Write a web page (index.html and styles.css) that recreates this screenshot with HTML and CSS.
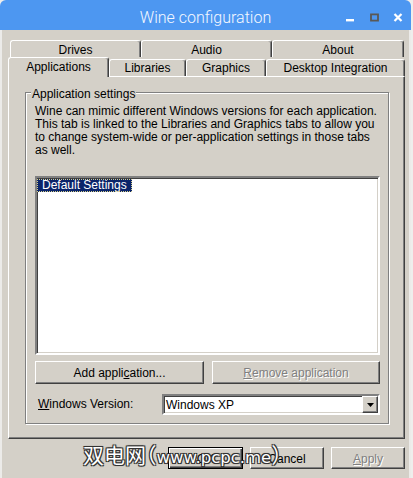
FILE: index.html
```html
<!DOCTYPE html>
<html>
<head>
<meta charset="utf-8">
<link rel="stylesheet" href="styles.css">
</head>
<body>
<div class="window">
  <div class="titlebar">
    <span class="title">Wine configuration</span>
    <svg class="controls" width="70" height="30" viewBox="0 0 70 30">
      <rect x="6" y="19" width="8" height="2.4" fill="#ffffff"/>
      <rect x="31" y="14.4" width="7" height="6.2" fill="none" stroke="#5a5855" stroke-width="1.8"/>
      <path d="M54.5 14 L61.5 21 M61.5 14 L54.5 21" stroke="#ffffff" stroke-width="2.2" stroke-linecap="butt"/>
    </svg>
  </div>
  <div class="frame">
    <div class="tabrow row1">
      <div class="tab t-drives">Drives</div>
      <div class="tab t-audio">Audio</div>
      <div class="tab t-about">About</div>
    </div>
    <div class="tabrow row2">
      <div class="tab sel t-apps">Applications</div>
      <div class="tab t-libs">Libraries</div>
      <div class="tab t-gfx">Graphics</div>
      <div class="tab t-desk">Desktop Integration</div>
    </div>
    <div class="panel">
      <div class="group">
        <div class="legend">Application settings</div>
        <div class="desc">Wine can mimic different Windows versions for each application.<br>This tab is linked to the Libraries and Graphics tabs to allow you<br>to change system-wide or per-application settings in those tabs<br>as well.</div>
        <div class="listbox">
          <div class="item">Default Settings</div>
        </div>
        <div class="btnrow">
          <div class="btn b-add">Add appli<u>c</u>ation...</div>
          <div class="btn b-remove disabled"><u>R</u>emove application</div>
        </div>
        <div class="verrow">
          <div class="verlabel"><u>W</u>indows Version:</div>
          <div class="combo">
            <span class="combotext">Windows XP</span>
            <span class="drop"><svg width="7" height="4" viewBox="0 0 7 4"><path d="M0 0 H7 L3.5 4 Z" fill="#000"/></svg></span>
          </div>
        </div>
      </div>
    </div>
    <div class="dlgbtns">
      <div class="btn dbtn ok">OK</div>
      <div class="btn dbtn">Cancel</div>
      <div class="btn dbtn disabled"><u>A</u>pply</div>
    </div>
  </div>
  <div class="watermark">双电网（<span class="wm-latin">www.pcpc.me</span>）</div>
</div>
</body>
</html>
```

FILE: styles.css
```css
* { box-sizing: border-box; }
html, body { margin: 0; padding: 0; }
body {
  background: #efeeec;
  width: 413px;
  height: 478px;
  overflow: hidden;
  font-family: "Liberation Sans", Arial, sans-serif;
  font-size: 12px;
  color: #000;
}
.window { position: relative; width: 411px; height: 478px; }

.titlebar {
  height: 30px;
  background: #4d97f1;
  border-radius: 6px 6px 0 0;
  display: grid;
  grid-template-columns: 1fr auto 1fr;
  align-items: center;
}
.title {
  grid-column: 2;
  font-family: Roboto, "Liberation Sans", sans-serif;
  font-weight: 300;
  font-size: 16px;
  color: #f4f8ff;
  margin-top: 5px;
}
.controls { grid-column: 3; justify-self: end; display: block; margin-right: 1px; }

.frame {
  height: 448px;
  background: #d4d0c8;
  border-left: 2px solid #ecebe9;
  border-right: 2px solid #ecebe9;
  padding-top: 10px;
}

.tabrow { display: flex; }
.row1 { margin-left: 8px; height: 17px; }
.row2 { margin-left: 6px; height: 19px; align-items: flex-end; }
.tab {
  height: 17px;
  line-height: 18px;
  text-align: center;
  white-space: nowrap;
  border-top: 1px solid #fff;
  border-left: 1px solid #fff;
  border-right: 1px solid #404040;
  box-shadow: inset -1px 0 #808080;
  border-radius: 3px 3px 0 0;
  background: #d4d0c8;
}
.row2 .tab { line-height: 17px; }
.row2 .tab.sel {
  height: 20px;
  line-height: 19px;
  margin-bottom: -1px;
  position: relative;
  z-index: 1;
}
.t-drives { width: 131px; }
.t-audio { width: 131px; }
.t-about { width: 132px; }
.t-apps { width: 101px; }
.t-libs { width: 77px; }
.t-gfx { width: 80px; }
.t-desk { width: 139px; }

.panel {
  margin-left: 6px;
  width: 397px;
  height: 363px;
  border: 1px solid;
  border-color: #fff #404040 #404040 #fff;
  box-shadow: inset -1px -1px #808080;
  padding: 15px 0 0 16px;
}

.group {
  width: 364px;
  height: 332px;
  border: 1px solid #808080;
  box-shadow: 1px 1px 0 #fff, inset 1px 1px 0 #fff;
  padding: 0 0 0 9px;
}
.legend {
  width: fit-content;
  height: 13px;
  line-height: 13px;
  margin: -5px 0 0 -4px;
  padding: 0 1px;
  background: #d4d0c8;
  white-space: nowrap;
}
.desc {
  margin-top: 4px;
  line-height: 13px;
  white-space: nowrap;
}

.listbox {
  margin-top: 19px;
  width: 345px;
  height: 179px;
  background: #fff;
  border: 2px solid;
  border-color: #808080 #fff #fff #808080;
  box-shadow: inset 1px 1px #404040, inset -1px -1px #d4d0c8;
}
.item {
  display: inline-block;
  height: 13px;
  line-height: 13px;
  padding: 0 5px 0 5px;
  background: #0a246a;
  color: #fff;
  outline: 1px dotted #d8cf8a;
  outline-offset: -1px;
  white-space: nowrap;
}

.btnrow {
  margin-top: 6px;
  width: 345px;
  display: flex;
  justify-content: space-between;
}
.btn {
  height: 23px;
  line-height: 22px;
  text-align: center;
  background: #d4d0c8;
  border: 1px solid;
  border-color: #fff #404040 #404040 #fff;
  box-shadow: inset -1px -1px #808080;
  white-space: nowrap;
}
.b-add { width: 169px; }
.b-remove { width: 168px; }
.disabled { color: #808080; text-shadow: 1px 1px 0 #fff; }

.verrow {
  margin-top: 10px;
  display: flex;
  align-items: center;
}
.verlabel { width: 127px; padding-left: 3px; white-space: nowrap; margin-top: -1px; }
.combo {
  width: 218px;
  height: 21px;
  background: #fff;
  border: 2px solid;
  border-color: #808080 #fff #fff #808080;
  box-shadow: inset 1px 1px #404040, inset -1px -1px #d4d0c8;
  display: flex;
  align-items: center;
  justify-content: space-between;
}
.combotext { padding-left: 2px; }
.drop {
  width: 16px;
  height: 17px;
  background: #d4d0c8;
  border: 1px solid;
  border-color: #fff #404040 #404040 #fff;
  box-shadow: inset -1px -1px #808080;
  display: flex;
  align-items: center;
  justify-content: center;
}
.drop svg { display: block; }

.dlgbtns {
  margin-left: 6px;
  width: 397px;
  margin-top: 8px;
  display: flex;
  justify-content: flex-end;
  gap: 7px;
}
.dbtn { width: 74px; height: 22px; line-height: 22px; }
.ok {
  width: 75px;
  border: 1px solid #000;
  box-shadow: inset 1px 1px #fff, inset -1px -1px #404040, inset -2px -2px #808080;
}

.watermark {
  position: absolute;
  left: 83px;
  top: 440px;
  font-family: "Noto Sans CJK SC", sans-serif;
  font-size: 21px;
  line-height: 28px;
  color: #fff;
  white-space: nowrap;
  font-feature-settings: "halt";
  text-shadow: 1px 1px 0 #333, -1px -1px 0 #333, 1px -1px 0 #333, -1px 1px 0 #333, 0 0 2px #000;
}
.wm-latin {
  font-family: "DejaVu Sans", sans-serif;
  font-size: 16.5px;
}
```
